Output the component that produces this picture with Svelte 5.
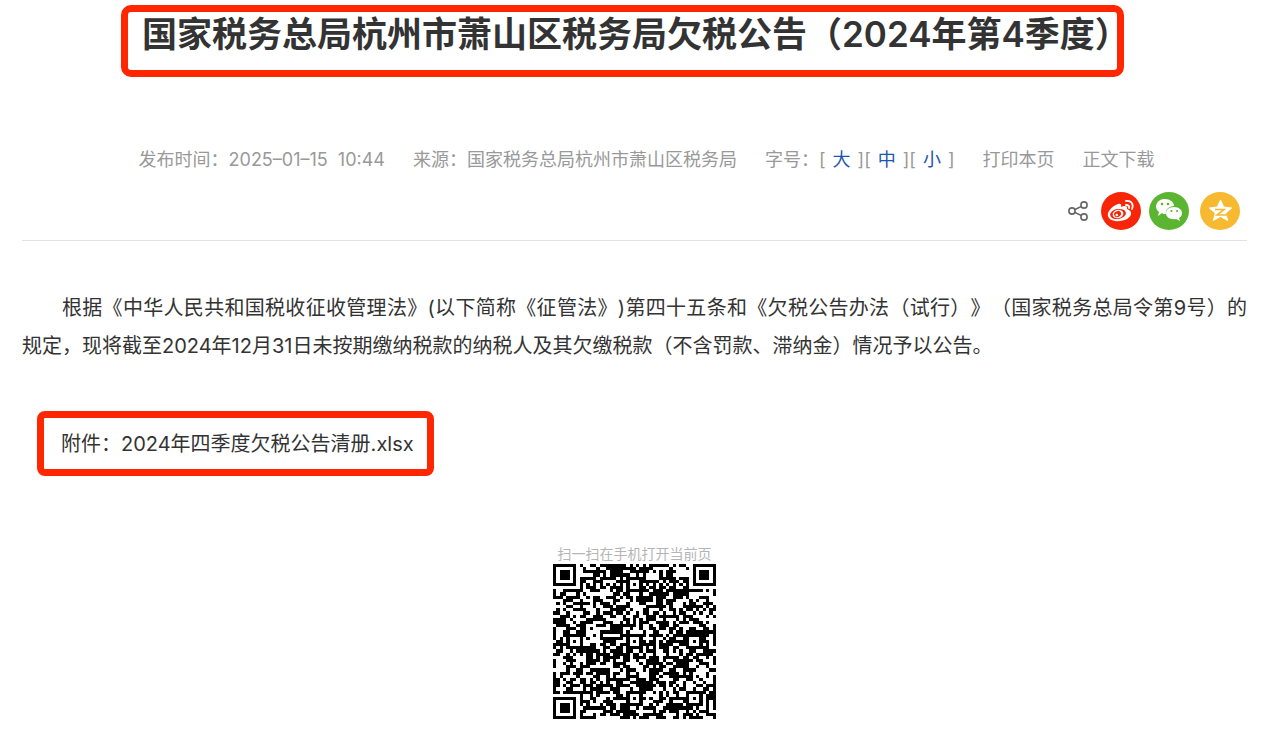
<script>
    const title = '国家税务总局杭州市萧山区税务局欠税公告（2024年第4季度）'
    const sizes = ['大', '中', '小']
    let size = $state('中')

    const printPage = () => window.print()

    // QR code, version 8
    const count = 49
    const centers = [6, 24, 42]

    const ring = (x, y, cx, cy) => Math.max(Math.abs(x - cx), Math.abs(y - cy))

    const buildCode = () => {
        let seed = 20250115
        let path = ''
        for (let y = 0; y < count; y++) {
            for (let x = 0; x < count; x++) {
                seed = (seed * 48271) % 2147483647
                let dark = seed / 2147483647 < 0.56
                if (x === 6 || y === 6) dark = (x + y) % 2 === 0
                for (const cx of centers) {
                    for (const cy of centers) {
                        const r = ring(x, y, cx, cy)
                        if (r <= 2) dark = r !== 1
                    }
                }
                for (const [cx, cy] of [[3, 3], [45, 3], [3, 45]]) {
                    const r = ring(x, y, cx, cy)
                    if (r <= 4) dark = r !== 2 && r !== 4
                }
                if (dark) path += `M${x} ${y}h1v1h-1z`
            }
        }
        return path
    }
    const code = buildCode()
</script>

<main class="page">
    <header>
        <h1>{title}</h1>
    </header>

    <div class="meta">
        <span>发布时间：2025–01–15&nbsp; 10:44</span>
        <span>来源：国家税务总局杭州市萧山区税务局</span>
        <span>字号：{#each sizes as s}<span class="size">[<button aria-pressed={size === s} onclick={() => size = s}>{s}</button>]</span>{/each}</span>
        <button onclick={printPage}>打印本页</button>
        <a href="#content">正文下载</a>
    </div>

    <div class="share">
        <svg class="shareIcon" viewBox="0 0 20 20" role="img" aria-label="分享">
            <g fill="none" stroke="#666" stroke-width="1.6">
                <path d="M6.5 8.8l7-3.4M6.5 11.2l7 3.4" />
                <circle cx="4" cy="10" r="3.1" />
                <circle cx="16" cy="4" r="3.1" />
                <circle cx="16" cy="16" r="3.1" />
            </g>
        </svg>
        <a href="#weibo" aria-label="微博">
            <svg viewBox="0 0 40 38" preserveAspectRatio="none">
                <ellipse cx="20" cy="19" rx="20" ry="19" fill="#f92508" />
                <path fill="#fff" d="M17 12c2-1 4 0 3 3 4-2 7-1 6 2 6 2 5 7 0 10-6 3-15 3-18-1-4-5 3-12 9-14z" />
                <ellipse cx="17" cy="22" rx="8" ry="5" transform="rotate(-9 17 22)" fill="#f92508" />
                <ellipse cx="17" cy="22" rx="5.4" ry="4.2" transform="rotate(-15 17 22)" fill="#fff" />
                <ellipse cx="16.5" cy="22.3" rx="3.6" ry="2.9" transform="rotate(-25 16 22)" fill="#f92508" />
                <circle cx="15.8" cy="23" r="1.3" fill="#fff" />
                <path fill="none" stroke="#fff" stroke-width="1.8" stroke-linecap="round" d="M25 9c5-1 8 3 6 8M25 13c2 0 4 1 3 3" />
            </svg>
        </a>
        <a href="#wechat" aria-label="微信">
            <svg viewBox="0 0 40 38" preserveAspectRatio="none">
                <ellipse cx="20" cy="19" rx="20" ry="19" fill="#5cb531" />
                <path fill="#fff" d="M16 7c5 0 9 3 9 7-5 0-9 4-8 8-2 0-3 0-4-1l-4 3 1-4c-6-5-2-13 6-13z" />
                <path fill="#fff" d="M25 15c5 0 8 3 8 6 0 2-1 4-3 5l1 3-4-2c-6 1-10-2-10-6 0-3 3-6 8-6z" />
                <g fill="#5cb531">
                    <circle cx="13" cy="12" r="1.3" />
                    <circle cx="19" cy="12" r="1.3" />
                    <circle cx="22.5" cy="19" r="1.1" />
                    <circle cx="28" cy="19" r="1.1" />
                </g>
            </svg>
        </a>
        <a class="qzone" href="#qzone" aria-label="QQ空间">
            <svg viewBox="0 0 40 38" preserveAspectRatio="none">
                <ellipse cx="20" cy="19" rx="20" ry="19" fill="#f6b92f" />
                <path fill="#fff" stroke="#fff" stroke-linejoin="round" d="M20.500 8l3.200 7 8 1-6 5.200 2 7.300-7.200-4-7.200 4 2-7.300-6-5.200 8-1z" />
                <path fill="none" stroke="#f6b92f" stroke-width="1.6" d="M15 17.500h9l-7 5.500h10" />
            </svg>
        </a>
    </div>

    <article id="content">
        <p>根据《中华人民共和国税收征收管理法》(以下简称《征管法》)第四十五条和《欠税公告办法（试行）》（国家税务总局令第9号）的规定，现将截至2024年12月31日未按期缴纳税款的纳税人及其欠缴税款（不含罚款、滞纳金）情况予以公告。</p>
        <a class="attachment" href="#attachment">附件：2024年四季度欠税公告清册.xlsx</a>
    </article>

    <footer>
        <span>扫一扫在手机打开当前页</span>
        <svg viewBox="0 0 {count} {count}" preserveAspectRatio="none" role="img" aria-label="二维码">
            <path d={code} />
        </svg>
    </footer>
</main>

<style>
    :global(body) {
        margin: 0;
        background: #fff;
    }
    .page {
        padding: 5px 27px 16px 22px;
        font-family: Inter, "Noto Sans CJK SC", sans-serif;
        color: #333;
        text-spacing-trim: space-all;
    }
    header {
        padding-right: 24px;
    }
    h1 {
        box-sizing: border-box;
        max-width: 1003px;
        margin: 0 auto;
        padding: 0 0 14px 14px;
        border: 7px solid #ff2600;
        border-radius: 10px;
        font-size: 35px;
        font-weight: 600;
        line-height: 44px;
        white-space: nowrap;
    }
    a, button {
        color: inherit;
        font: inherit;
        text-decoration: none;
    }
    button {
        padding: 0;
        border: 0;
        background: none;
        cursor: pointer;
    }
    .meta {
        display: flex;
        justify-content: center;
        gap: 28px;
        margin-top: 68px;
        padding-left: 24px;
        color: #999;
        font-size: 18px;
        line-height: 30px;
        white-space: nowrap;
    }
    .size button {
        margin: 0 7px;
        color: #1d56b0;
    }
    .share {
        display: flex;
        justify-content: flex-end;
        align-items: center;
        gap: 8px;
        margin-top: 17px;
        padding: 0 7px 10px 0;
        border-bottom: 1px solid #e2e2e2;
    }
    .share svg {
        display: block;
        width: 40px;
        height: 38px;
    }
    .share .shareIcon {
        width: 20px;
        height: 20px;
        margin-right: 5px;
    }
    .qzone {
        margin-left: 3px;
    }
    article {
        padding-top: 48px;
        font-size: 20px;
        line-height: 38px;
    }
    p {
        margin: 0 0 46px;
        text-indent: 2em;
        text-align: justify;
    }
    .attachment {
        display: block;
        width: fit-content;
        margin-left: 15px;
        padding: 7px 13px 6px 17px;
        border: 7px solid #ff2600;
        border-radius: 8px;
    }
    footer {
        display: flex;
        flex-direction: column;
        align-items: center;
        gap: 1px;
        margin-top: 69px;
        color: #b5b5b5;
        font-size: 14px;
        line-height: 18px;
    }
    footer svg {
        width: 163px;
        height: 155px;
        fill: #000;
        shape-rendering: crispEdges;
    }
</style>
